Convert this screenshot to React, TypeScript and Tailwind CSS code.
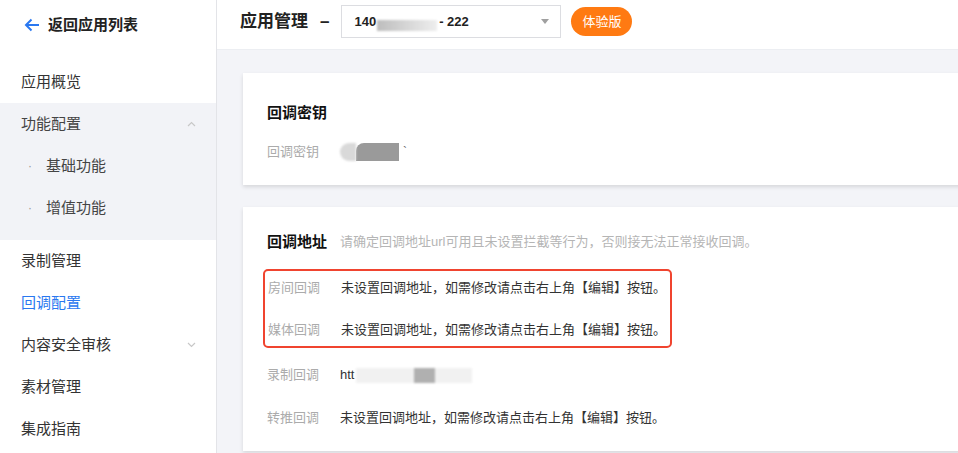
import React from "react";

const Chevron = ({ up }: { up?: boolean }) => (
  <svg width="9" height="6" viewBox="0 0 9 6" className={up ? "" : "rotate-180"}>
    <path d="M1 5 L4.5 1.5 L8 5" fill="none" stroke="#c8c8c8" strokeWidth="1.2" />
  </svg>
);

const NavItem = ({ children, active, chevron }: { children: React.ReactNode; active?: boolean; chevron?: boolean }) => (
  <div className="flex h-[42px] items-center justify-between pl-[21px] pr-[20px]">
    <span className={active ? "text-[15px] text-[#2a78f0]" : "text-[15px] text-[#333]"}>{children}</span>
    {chevron && <Chevron />}
  </div>
);

const SubItem = ({ children }: { children: React.ReactNode }) => (
  <div className="flex h-[42px] items-center pl-[28px]">
    <span className="w-[18px] text-[12px] text-[#999]">·</span>
    <span className="text-[15px] text-[#444]">{children}</span>
  </div>
);

const Row = ({ label, children }: { label: string; children: React.ReactNode }) => (
  <div className="flex h-[20px] items-center leading-[20px]">
    <span className="w-[73px] shrink-0 text-[13px] text-[#ababab]">{label}</span>
    <span className="text-[13px] text-[#333]">{children}</span>
  </div>
);

const EMPTY = "未设置回调地址，如需修改请点击右上角【编辑】按钮。";

export default function App() {
  return (
    <div className="flex h-[453px] w-[958px] overflow-hidden bg-white font-['Liberation_Sans','Noto_Sans_CJK_SC',sans-serif]">
      <aside className="w-[217px] shrink-0 border-r border-[#e3e4e8] bg-white">
        <div className="flex h-[50px] items-center gap-[8px] pl-[24px]">
          <svg width="16" height="14" viewBox="0 0 16 14">
            <path d="M15 7 H2 M7.5 1.5 L2 7 L7.5 12.5" fill="none" stroke="#2a78f0" strokeWidth="2" />
          </svg>
          <span className="text-[15px] font-semibold text-[#222]">返回应用列表</span>
        </div>
        <div className="mt-[11px]">
          <NavItem>应用概览</NavItem>
          <div className="bg-[#f2f3f7] pb-[11px]">
            <div className="flex h-[42px] items-center justify-between pl-[21px] pr-[20px]">
              <span className="text-[15px] text-[#444]">功能配置</span>
              <Chevron up />
            </div>
            <SubItem>基础功能</SubItem>
            <SubItem>增值功能</SubItem>
          </div>
          <NavItem>录制管理</NavItem>
          <NavItem active>回调配置</NavItem>
          <NavItem chevron>内容安全审核</NavItem>
          <NavItem>素材管理</NavItem>
          <NavItem>集成指南</NavItem>
        </div>
      </aside>

      <main className="flex min-w-0 flex-1 flex-col">
        <header className="flex h-[50px] shrink-0 items-start border-b border-[#eceef2] bg-white pl-[23px] pt-[5px]">
          <div className="flex h-[33px] items-center">
            <span className="text-[17px] font-semibold text-[#222]">应用管理</span>
            <span className="ml-[12px] text-[17px] font-semibold text-[#222]">–</span>
            <div className="ml-[12px] flex h-[33px] w-[220px] items-center justify-between border border-[#dcdde1] pl-[12px] pr-[11px]">
              <span className="flex items-center text-[13px] font-bold text-[#222]">
                140
                <span className="ml-[1px] mt-[8px] inline-block h-[11px] w-[60px] bg-gradient-to-r from-[#bdbdbd] via-[#d6d6d6] to-[#eeeeee] blur-[1px]" />
                <span className="ml-[2px]">- 222</span>
              </span>
              <svg width="8" height="5" viewBox="0 0 8 5">
                <path d="M0 0 H8 L4 5 Z" fill="#a0a0a0" />
              </svg>
            </div>
            <span className="ml-[10px] flex h-[29px] w-[61px] items-center justify-center rounded-full bg-[#ff7a12] text-[13px] text-white">
              体验版
            </span>
          </div>
        </header>

        <div className="flex flex-1 flex-col gap-[22px] overflow-hidden bg-[#f3f4f8] pl-[26px] pt-[23px]">
          <section className="h-[112px] w-[740px] shrink-0 bg-white pl-[24px] pt-[30px] shadow-[0_2px_4px_rgba(0,0,0,0.12)]">
            <div className="h-[20px] text-[15px] font-bold leading-[20px] text-[#111]">回调密钥</div>
            <div className="mt-[19px]">
              <Row label="回调密钥">
                <span className="flex items-center">
                  <span className="inline-block h-[18px] w-[16px] rounded-l-full bg-[#d9d9d9] blur-[1px]" />
                  <span className="inline-block h-[18px] w-[43px] rounded-tl-[8px] bg-[#9a9a9a]" />
                  <span className="ml-[4px] text-[12px] text-[#666]">`</span>
                </span>
              </Row>
            </div>
          </section>

          <section className="h-[244px] w-[740px] shrink-0 bg-white pl-[24px] pt-[25px] shadow-[0_2px_4px_rgba(0,0,0,0.12)]">
            <div className="flex h-[20px] items-center leading-[20px]">
              <span className="text-[15px] font-bold text-[#111]">回调地址</span>
              <span className="ml-[13px] text-[13px] text-[#b5b5b5]">请确定回调地址url可用且未设置拦截等行为，否则接无法正常接收回调。</span>
            </div>
            <div className="-ml-[4px] mt-[17px] flex w-[409px] flex-col gap-[22px] rounded-[5px] border-2 border-[#f0442f] pb-[6px] pl-[3px] pt-[7px]">
              <Row label="房间回调">{EMPTY}</Row>
              <Row label="媒体回调">{EMPTY}</Row>
            </div>
            <div className="mt-[17px]">
              <Row label="录制回调">
                <span className="flex items-center">
                  htt
                  <span className="ml-[2px] flex h-[15px] w-[116px] items-center bg-[#f1f1f1] blur-[1px]">
                    <span className="ml-[58px] inline-block h-[15px] w-[21px] bg-[#b0b0b0]" />
                  </span>
                </span>
              </Row>
            </div>
            <div className="mt-[23px]">
              <Row label="转推回调">{EMPTY}</Row>
            </div>
          </section>
        </div>
      </main>
    </div>
  );
}
